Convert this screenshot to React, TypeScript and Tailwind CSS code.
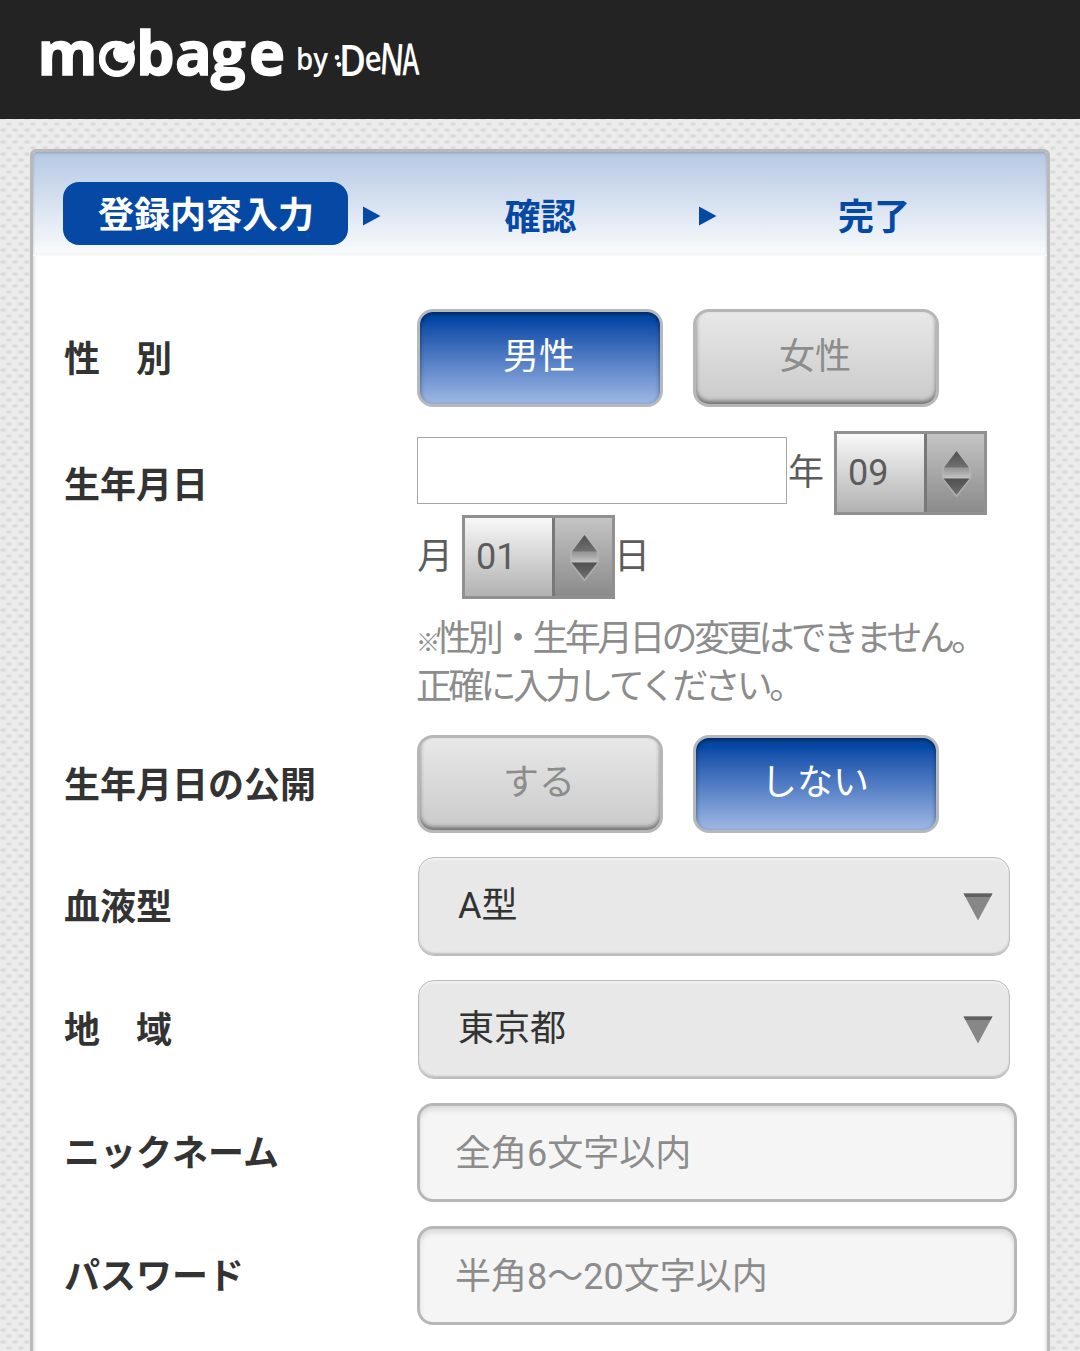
import React from 'react';

const Logo: React.FC = () => (
  <svg width="440" height="112" viewBox="0 0 440 112" fill="#ffffff" aria-label="mobage by DeNA">
    <text x="37.5 97 136 175 211 249" y="75" fontFamily="Open Sans" fontWeight="700" fontSize="61" stroke="#ffffff" strokeWidth="1.500">
      mobage
    </text>
    {/* Crescent moon inside the "o" */}
    <circle cx="117" cy="59" r="14.500" fill="none" stroke="#ffffff" strokeWidth="7" />
    <circle cx="117" cy="59" r="11.500" fill="#232323" />
    <circle cx="122.500" cy="53.500" r="9.500" />
    <path d="M120 43 Q130 46 134 40 L135 47 Q135 51 130 55 Z" />
    <text x="296" y="70" fontFamily="Open Sans" fontWeight="600" fontSize="31" textLength="32" lengthAdjust="spacingAndGlyphs">
      by
    </text>
    <circle cx="337" cy="57.500" r="2.400" />
    <circle cx="339" cy="64.500" r="2.400" />
    {/* Hand-lettered company name, each letter slightly uneven */}
    <g fontFamily="Open Sans" fontWeight="600" fontSize="44">
      <text x="339" y="76" textLength="27" lengthAdjust="spacingAndGlyphs">D</text>
      <text x="365" y="71" fontSize="35" textLength="17" lengthAdjust="spacingAndGlyphs" transform="rotate(-6 373 64)">e</text>
      <text x="380" y="75" textLength="24" lengthAdjust="spacingAndGlyphs" transform="rotate(4 393 60)">N</text>
      <text x="402" y="75" textLength="17" lengthAdjust="spacingAndGlyphs" transform="rotate(-2 410 60)">A</text>
    </g>
  </svg>
);

const StepArrow: React.FC = () => (
  <svg width="18" height="20" viewBox="0 0 18 20" className="shrink-0">
    <path d="M0 0.500 L17.500 10 L0 19.500 Z" fill="#0549a4" />
  </svg>
);

interface ToggleButtonProps {
  label: string;
  active?: boolean;
}

const ToggleButton: React.FC<ToggleButtonProps> = ({ label, active = false }) => (
  <button
    className={
      active
        ? 'h-[98px] w-[246px] rounded-2xl border-[3px] border-[#b4b9be] bg-linear-to-b from-[#0549a6] from-10% to-[#9fb8e4] pr-0.5 pb-[3px] text-white shadow-[inset_0_2px_4px_rgba(0,0,0,0.5)]'
        : 'h-[98px] w-[246px] rounded-2xl border-[3px] border-[#b6b6b6] bg-linear-to-b from-[#e8e8e8] to-[#cacaca] pr-0.5 pb-[3px] text-[#8c8c8c] shadow-[inset_0_-3px_4px_rgba(0,0,0,0.45)]'
    }
  >
    {label}
  </button>
);

const Spinner: React.FC<{ value: string }> = ({ value }) => (
  <div className="flex h-[84px] w-[153px] border-[3px] border-[#909090] bg-[#aaa]">
    <div className="flex flex-1 items-center bg-linear-to-b from-[#f8f8f8] to-[#b2b2b2] pl-[11px] text-[#5c5c5c]">
      {value}
    </div>
    <div className="flex w-[60px] items-center justify-center border-l-[3px] border-[#787878] bg-linear-to-b from-[#c4c4c4] to-[#8b8b8b]">
      <svg width="36" height="52" viewBox="0 0 36 52">
        <defs>
          <linearGradient id="arrow" x1="0" y1="0" x2="0" y2="1">
            <stop offset="0" stopColor="#505050" />
            <stop offset="1" stopColor="#707070" />
          </linearGradient>
          <linearGradient id="halo" x1="0" y1="0" x2="0" y2="1">
            <stop offset="0" stopColor="#b4b4b4" />
            <stop offset="0.4" stopColor="#989898" />
            <stop offset="0.58" stopColor="#c0c0c0" />
            <stop offset="1" stopColor="#bababa" />
          </linearGradient>
        </defs>
        <path d="M18.500 4 L32 21 V31 L18.500 49 L5 31 V21 Z" fill="url(#halo)" stroke="#b8b8b8" strokeOpacity="0.6" strokeWidth="2.500" strokeLinejoin="round" />
        <path d="M18.500 4 L31 20.500 H6 Z" fill="url(#arrow)" />
        <path d="M5.500 31.500 H31.500 L18.500 48 Z" fill="url(#arrow)" />
      </svg>
    </div>
  </div>
);

const SelectBox: React.FC<{ value: string }> = ({ value }) => (
  <div className="ml-px flex h-[99px] w-[592px] items-center justify-between rounded-2xl border border-[#bcbcbc] bg-[#e8e8e8] pr-4 pl-[39px] text-[#333] shadow-[inset_0_2px_2px_#f2f2f2,inset_0_-2px_2px_#bdbdbd]">
    <span className="pb-0.5">{value}</span>
    <svg width="30" height="28" viewBox="0 0 30 28">
      <path d="M0.500 0.500 H29.500 L15 27.500 Z" fill="#878787" />
      <path d="M0.500 0.500 H29.500 L27.500 4 H2.500 Z" fill="#606060" />
    </svg>
  </div>
);

const TextBox: React.FC<{ placeholder: string }> = ({ placeholder }) => (
  <input
    placeholder={placeholder}
    className="h-[99px] w-[600px] rounded-2xl border-[3px] border-[#b7b7b7] bg-[#f5f5f5] px-[35px] pt-[3px] shadow-[inset_0_4px_5px_rgba(0,0,0,0.1)] placeholder:text-[#8c8c8c]"
  />
);

interface RowProps {
  label: string;
  children: React.ReactNode;
}

const Row: React.FC<RowProps> = ({ label, children }) => (
  <div className="flex">
    <div className="flex h-[98px] w-[353px] shrink-0 items-center pt-1 font-bold text-[#333]">{label}</div>
    <div>{children}</div>
  </div>
);

export default function App() {
  return (
    <div className="h-[1351px] overflow-hidden bg-[#ececec] bg-[radial-gradient(ellipse_4px_2.5px_at_center,#d8d8d8_30%,transparent),radial-gradient(ellipse_4px_2.5px_at_center,#d8d8d8_30%,transparent)] bg-size-[12px_12px] bg-position-[3px_-2px,9px_4px] font-[Roboto,'Noto_Sans_CJK_JP',sans-serif] text-[36px] leading-[48px]">
      <header className="h-[119px] bg-[#232323]">
        <Logo />
      </header>

      <main className="mx-[30px] mt-[30px] h-[1300px] rounded-md border-[3px] border-[#b9b9b9] bg-white shadow-[inset_0_0_4px_rgba(0,0,0,0.25)]">
        {/* Registration steps */}
        <nav className="flex h-[104px] items-start rounded-t-sm border-b-2 border-[#f8f8f8] bg-linear-to-b from-[#b5c8e4] to-[#fafbfc] pt-[30px] pl-[30px] font-bold text-[#0549a4] shadow-[inset_0_1px_3px_rgba(0,0,0,0.2)]">
          <div className="h-[63px] w-[285px] rounded-2xl bg-[#0549a4] pt-[10px] pl-px text-center text-white">
            登録内容入力
          </div>
          <div className="flex items-center pt-3">
            <div className="-mt-1 ml-[15px] flex">
              <StepArrow />
            </div>
            <div className="w-[318px] pl-px text-center">確認</div>
            <div className="-mt-1 flex">
              <StepArrow />
            </div>
            <div className="w-[313px] pl-px text-center">完了</div>
          </div>
        </nav>

        <form className="flex flex-col pt-[53px] pl-[31px]">
          <Row label="性　別">
            <div className="flex gap-[30px]">
              <ToggleButton label="男性" active />
              <ToggleButton label="女性" />
            </div>
          </Row>

          <div className="mt-6 flex h-[304px]">
            <div className="w-[353px] shrink-0 pt-[31px] font-bold text-[#333]">生年月日</div>
            <div className="text-[#5c5c5c]">
              <div className="flex h-[84px] items-center">
                <input className="mb-1.5 h-[67px] w-[370px] border border-[#a6a6a6] bg-white" />
                <span className="w-[47px] pl-px">年</span>
                <Spinner value="09" />
              </div>
              <div className="flex h-[84px] items-center">
                <span className="w-[45px]">月</span>
                <Spinner value="01" />
                <span className="-ml-px">日</span>
              </div>
              <p className="-ml-px pt-4 tracking-[-3.7px] whitespace-nowrap text-[#8c8c8c]">
                <span className="text-[24px] leading-none font-medium tracking-[-4.5px]">※</span>性別・生年月日の変更はできません。
                <br />
                正確に入力してください。
              </p>
            </div>
          </div>

          <Row label="生年月日の公開">
            <div className="flex gap-[30px]">
              <ToggleButton label="する" />
              <ToggleButton label="しない" active />
            </div>
          </Row>

          <div className="mt-6 flex flex-col gap-6">
            <Row label="血液型">
              <SelectBox value="A型" />
            </Row>
            <Row label="地　域">
              <SelectBox value="東京都" />
            </Row>
            <Row label="ニックネーム">
              <TextBox placeholder="全角6文字以内" />
            </Row>
            <Row label="パスワード">
              <TextBox placeholder="半角8〜20文字以内" />
            </Row>
          </div>
        </form>
      </main>
    </div>
  );
}
